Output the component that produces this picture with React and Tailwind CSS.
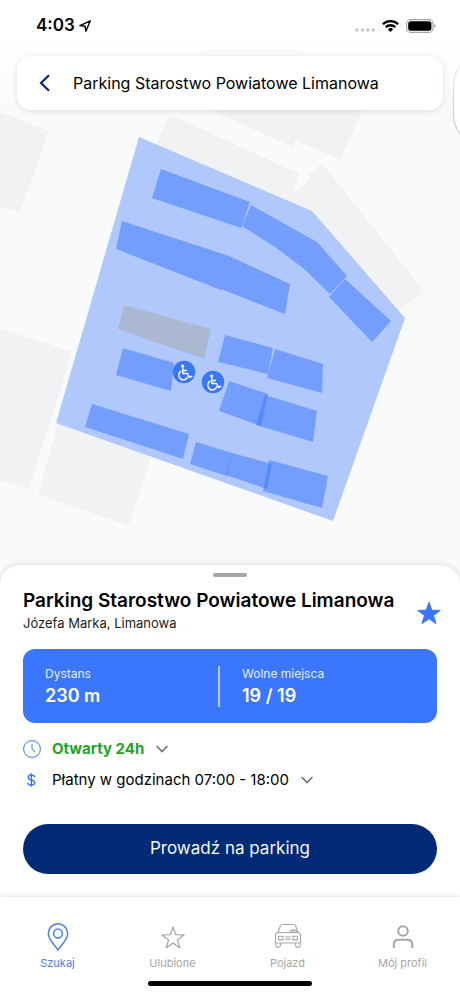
import { useState } from "react";

const buildings = [
  "0,113 48,131 20,212 0,206",
  "170,115 299,174 287,210 150,158",
  "205,50 300,50 363,108 340,159 295,140 292,146 205,107",
  "322,164 424,292 396,312 328,256 286,200 312,178 308,175",
  "0,329 72,352 28,489 0,480",
  "61,413 154,446 128,525 39,494",
];

const parkingArea = "139,137 312,211 405,318 333,521 56,423";

const spots = [
  "161,169 250,202 241,228 152,198",
  "251,205 317,242 347,276 330,294 303,268 275,247 242,226",
  "345,279 391,321 372,342 329,297",
  "122,221 229,256 221,290 116,249",
  "229,256 290,284 285,314 221,289",
  "123,348 174,363 171,391 116,375",
  "225,335 273,348 268,374 218,362",
  "275,349 323,364 322,393 267,378",
  "229,381 268,394 261,426 219,411",
  "265,395 317,411 313,442 256,425",
  "92,404 189,434 183,459 85,427",
  "196,442 232,453 227,476 190,464",
  "232,453 272,464 267,489 226,475",
  "269,460 328,476 322,508 263,491",
];

const tabs = [
  { id: "szukaj", label: "Szukaj", Icon: PinIcon },
  { id: "ulubione", label: "Ulubione", Icon: StarIcon },
  { id: "pojazd", label: "Pojazd", Icon: CarIcon },
  { id: "profil", label: "Mój profil", Icon: UserIcon },
];

const starPath = "M12 1.2 14.8 9.2 23.3 9.4 16.5 14.5 19 22.6 12 17.8 5 22.6 7.5 14.5.7 9.4 9.2 9.2Z";

function PinIcon() {
  return (
    <svg className="h-7 w-7" viewBox="0 0 28 28" fill="none" stroke="currentColor" strokeWidth="1.5">
      <path d="M14 27C12 23.5 4.3 17 4.3 10.5a9.7 9.7 0 0 1 19.4 0C23.7 17 16 23.5 14 27Z" strokeLinejoin="round" />
      <circle cx="14" cy="10.5" r="4.4" />
    </svg>
  );
}

function StarIcon() {
  return (
    <svg className="h-7 w-7" viewBox="-2 -2.5 28 28" fill="none" stroke="currentColor" strokeWidth="1.3">
      <path d="M12 1.4 14.7 9.2 23 9.4 16.4 14.4 18.7 22.2 12 17.6 5.3 22.2 7.6 14.4 1 9.4 9.3 9.2Z" strokeLinejoin="round" />
    </svg>
  );
}

function CarIcon() {
  return (
    <svg className="h-7 w-7" viewBox="0 1.5 28 28" fill="none" stroke="currentColor" strokeWidth="1.1" strokeLinejoin="round">
      <path d="M3.8 11.5 6.3 4.5Q7 3 8.5 3H19.5Q21 3 21.7 4.5L24.2 11.5" />
      <path d="M4 11H24Q26.6 11.5 26.6 14V20.5Q26.6 21.5 25.6 21.5H2.4Q1.4 21.5 1.4 20.5V14Q1.4 11.5 4 11Z" />
      <path d="M1.8 21.5V23.5a2.3 2.3 0 0 0 4.6 0V21.5M21.6 21.5V23.5a2.3 2.3 0 0 0 4.6 0V21.5" />
      <path d="M16 11a3.5 3.5 0 0 1 6.8 0M18.5 10.5 20.5 8" />
      <rect x="4.5" y="14.8" width="4.5" height="3.6" />
      <rect x="19" y="14.8" width="4.5" height="3.6" />
      <path d="M11.2 15.5H16.8M11.2 17.9H16.8" />
    </svg>
  );
}

function UserIcon() {
  return (
    <svg className="h-7 w-7" viewBox="0 0 28 28" fill="none" stroke="currentColor" strokeWidth="2">
      <circle cx="14" cy="8" r="4.8" />
      <path d="M4.8 25V21.5Q4.8 16.8 9.5 16.8H18.5Q23.2 16.8 23.2 21.5V25" />
    </svg>
  );
}

function ChevronDown() {
  return (
    <svg className="h-3 w-3" viewBox="0 0 12 12" fill="none" stroke="#707070" strokeWidth="1.6">
      <path d="M.6 3 6 8.6 11.4 3" />
    </svg>
  );
}

function DisabledSpot({ x, y }) {
  return (
    <g transform={`translate(${x} ${y})`}>
      <circle r="11.2" fill="#3b76f6" />
      <g fill="none" stroke="#fff" strokeWidth="1.4" strokeLinecap="round" strokeLinejoin="round">
        <path d="M-1.2-4.2V1.5H3.5L5.6 5.4 7.8 4.3M-1-1.5H2.5" />
        <path d="M-3-.8A4.7 4.7 0 1 0 3.9 4.8" />
      </g>
      <circle cx="-1.3" cy="-6" r="1.6" fill="#fff" />
    </g>
  );
}

function ParkingMap() {
  return (
    <svg className="absolute inset-0 h-full w-full" viewBox="0 0 460 590" preserveAspectRatio="xMidYMin slice" aria-hidden="true">
      <defs>
        <linearGradient id="fade" x1="0" y1="0" x2="0" y2="1">
          <stop offset="0.3" stopColor="#fff" />
          <stop offset="1" stopColor="#fff" stopOpacity="0" />
        </linearGradient>
      </defs>
      <rect width="460" height="590" fill="#f8fafb" />
      {buildings.map((points) => (
        <polygon key={points} points={points} fill="#f1f2f3" stroke="#edeff0" strokeWidth="0.5" />
      ))}
      <rect x="453.5" y="52" width="70" height="96" rx="34" fill="#fff" stroke="#cfd1d3" strokeWidth="1.2" />
      <polygon points={parkingArea} fill="#acc5fd" fillOpacity="0.94" />
      <polygon points="124,305 211,329 204,359 118,329" fill="#abb8d1" />
      {spots.map((points) => (
        <polygon key={points} points={points} fill="#3b76ff" fillOpacity="0.52" />
      ))}
      <DisabledSpot x={184} y={372} />
      <DisabledSpot x={213} y={382} />
      <rect width="460" height="110" fill="url(#fade)" />
    </svg>
  );
}

function StatusBar() {
  return (
    <div className="relative flex h-14 items-start justify-between pt-3 pr-6 pl-9">
      <div className="flex h-7 items-center gap-1 text-[17px] font-semibold">
        <span>4:03</span>
        <svg className="h-3 w-3" viewBox="0 0 12 12" fill="none" stroke="#000" strokeWidth="1.4" strokeLinejoin="round">
          <path d="M11.2.9.9 5.6 6 6.2 6.9 11.2Z" />
        </svg>
      </div>
      <div className="flex h-7 items-center gap-[7px]">
        <svg className="mt-2 h-1 w-5" viewBox="0 0 20 4" fill="#c9c9c9">
          <circle cx="1.8" cy="2" r="1.8" />
          <circle cx="7.4" cy="2" r="1.8" />
          <circle cx="12.9" cy="2" r="1.8" />
          <circle cx="18.2" cy="2" r="1.8" />
        </svg>
        <svg className="h-3 w-[17px]" viewBox="0 0 17 12" fill="none" stroke="#000" strokeWidth="2.3">
          <path d="M.9 4.2a11 11 0 0 1 15.2 0M3.7 7.2a6.9 6.9 0 0 1 9.6 0" />
          <path d="M8.5 12 5.8 9.3a3.9 3.9 0 0 1 5.4 0Z" fill="#000" stroke="none" />
        </svg>
        <svg className="h-3.5 w-[30px]" viewBox="0 0 30 14">
          <rect x=".6" y=".6" width="26.4" height="12.8" rx="4" fill="none" stroke="#a3a3a3" strokeWidth="1.1" />
          <rect x="2.2" y="2.2" width="23.2" height="9.6" rx="2.5" />
          <path d="M28.2 4.8Q29.6 5.5 29.6 7T28.2 9.2Z" fill="#a3a3a3" />
        </svg>
      </div>
    </div>
  );
}

function ParkingSheet() {
  const [favourite, setFavourite] = useState(true);

  return (
    <section className="relative -mt-6 rounded-t-[20px] bg-white px-[23px] pt-2 pb-[23px] shadow-[0_-1px_5px_rgba(0,0,0,0.12)]">
      <div className="mx-auto h-1 w-[34px] rounded-sm bg-[#a6a6a6]" />
      <div className="mt-3 flex items-center justify-between">
        <div>
          <h1 className="text-[19px] leading-6 font-semibold">Parking Starostwo Powiatowe Limanowa</h1>
          <p className="text-[13px] leading-5 text-[#1c1c1c]">Józefa Marka, Limanowa</p>
        </div>
        <button
          type="button"
          className="mt-1 -mr-1 text-[#3b76ff]"
          aria-label="Ulubione"
          aria-pressed={favourite}
          onClick={() => setFavourite(!favourite)}
        >
          <svg className="h-6 w-6" viewBox="0 0 24 24" fill={favourite ? "currentColor" : "none"} stroke="currentColor" strokeWidth="1" strokeLinejoin="round">
            <path d={starPath} />
          </svg>
        </button>
      </div>

      <dl className="mt-4 flex h-[74px] items-center rounded-xl bg-[#3b76ff] px-[22px] text-white">
        <div className="flex-1">
          <dt className="text-xs leading-5 text-[#e4ecff]">Dystans</dt>
          <dd className="text-lg leading-6 font-semibold">230 m</dd>
        </div>
        <div className="mr-[22px] h-[41px] w-0.5 bg-[#b3caff]" role="presentation" />
        <div className="flex-1">
          <dt className="text-xs leading-5 text-[#e4ecff]">Wolne miejsca</dt>
          <dd className="text-lg leading-6 font-semibold">19 / 19</dd>
        </div>
      </dl>

      <button type="button" className="mt-4 flex h-5 items-center">
        <svg className="h-[18px] w-[18px] text-[#3b76ff]" viewBox="0 0 18 18" fill="none" stroke="currentColor" strokeWidth="1">
          <circle cx="9" cy="9" r="8.4" />
          <path d="M9 3.8V9L12.2 12.2" />
        </svg>
        <span className="mr-3 ml-[11px] text-[15px] font-bold text-[#21a61f]">Otwarty 24h</span>
        <ChevronDown />
      </button>
      <button type="button" className="mt-[11px] flex h-5 items-center">
        <svg className="h-[18px] w-[18px] text-[#3b76ff]" viewBox="0 0 18 18" fill="none" stroke="currentColor" strokeWidth="1.4">
          <path d="M11.6 6.2Q11.3 4 8.3 4T5.2 6.4Q5.2 8.3 8.3 9T11.8 11.7Q11.8 14 8.3 14T4.8 11.7M8.3 2.2V15.8" />
        </svg>
        <span className="mr-3 ml-[11px] text-[15px]">Płatny w godzinach 07:00 - 18:00</span>
        <ChevronDown />
      </button>

      <button type="button" className="mt-[34px] h-[50px] w-full rounded-full bg-[#002a76] text-[17px] text-[#f3f6fb]">
        Prowadź na parking
      </button>
    </section>
  );
}

function TabBar() {
  const [active, setActive] = useState("szukaj");

  return (
    <nav className="relative bg-white pt-[26px] pb-[10px] shadow-[0_-1px_4px_rgba(0,0,0,0.12)]">
      <div className="grid grid-cols-4">
        {tabs.map(({ id, label, Icon }) => (
          <button
            key={id}
            type="button"
            onClick={() => setActive(id)}
            className={`flex flex-col items-center gap-1 text-[11px] leading-4 ${active === id ? "text-[#4a7fe8]" : "text-[#a6a6a6]"}`}
          >
            <Icon />
            {label}
          </button>
        ))}
      </div>
      <div className="mx-auto mt-[10px] h-[5px] w-[164px] rounded-full bg-black" />
    </nav>
  );
}

export default function App() {
  return (
    <div className="flex min-h-screen flex-col bg-[#f8fafb] font-['Inter','Liberation_Sans',sans-serif] text-black">
      <main className="relative min-h-96 flex-1">
        <ParkingMap />
        <StatusBar />
        <header className="relative mx-[17px] flex h-[54px] items-center rounded-[14px] bg-white pl-5 shadow-[0_1px_6px_rgba(0,0,0,0.12)]">
          <button type="button" aria-label="Wstecz">
            <svg className="h-[18px] w-4" viewBox="0 0 16 18" fill="none" stroke="#002a76" strokeWidth="2.2">
              <path d="M12 1.2 4 9 12 16.8" />
            </svg>
          </button>
          <span className="ml-5 text-base">Parking Starostwo Powiatowe Limanowa</span>
        </header>
      </main>
      <ParkingSheet />
      <TabBar />
    </div>
  );
}
